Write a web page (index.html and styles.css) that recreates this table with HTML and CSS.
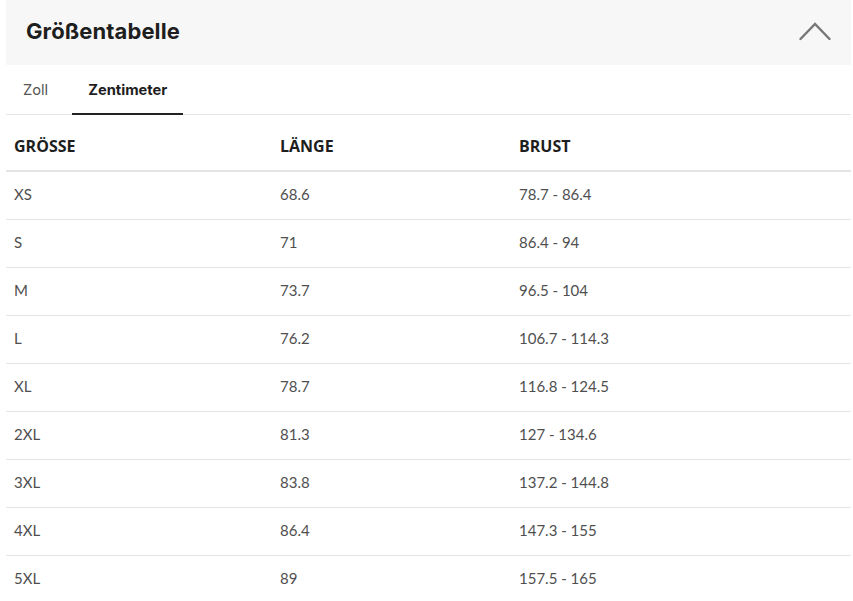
FILE: index.html
```html
<!DOCTYPE html>
<html lang="de">
<head>
<meta charset="utf-8">
<title>Größentabelle</title>
<link rel="stylesheet" href="styles.css">
</head>
<body>
<div class="panel">
  <div class="panel-head">
    <h2 class="panel-title">Größentabelle</h2>
    <svg class="chevron" width="32" height="20" viewBox="0 0 32 20" aria-hidden="true">
      <polyline points="1.5,18 16,3 30.5,18" fill="none" stroke="#777" stroke-width="2.4" stroke-linecap="round" stroke-linejoin="miter"/>
    </svg>
  </div>
  <div class="tabs">
    <div class="tab">Zoll</div>
    <div class="tab tab-active">Zentimeter</div>
  </div>
  <table class="sizes">
    <thead>
      <tr><th class="c1">GRÖSSE</th><th class="c2">LÄNGE</th><th>BRUST</th></tr>
    </thead>
    <tbody>
      <tr><td>XS</td><td>68.6</td><td>78.7 - 86.4</td></tr>
      <tr><td>S</td><td>71</td><td>86.4 - 94</td></tr>
      <tr><td>M</td><td>73.7</td><td>96.5 - 104</td></tr>
      <tr><td>L</td><td>76.2</td><td>106.7 - 114.3</td></tr>
      <tr><td>XL</td><td>78.7</td><td>116.8 - 124.5</td></tr>
      <tr><td>2XL</td><td>81.3</td><td>127 - 134.6</td></tr>
      <tr><td>3XL</td><td>83.8</td><td>137.2 - 144.8</td></tr>
      <tr><td>4XL</td><td>86.4</td><td>147.3 - 155</td></tr>
      <tr><td>5XL</td><td>89</td><td>157.5 - 165</td></tr>
    </tbody>
  </table>
</div>
</body>
</html>
```
FILE: styles.css
```css
html, body {
  margin: 0;
  padding: 0;
  background: #fff;
}
body {
  font-family: "Lato", "Liberation Sans", sans-serif;
  color: #222;
}
.panel {
  margin: 0 2px 0 6px;
}
.panel-head {
  height: 65px;
  background: #f7f7f7;
  display: flex;
  align-items: center;
  justify-content: space-between;
  padding: 0 20px 0 20px;
}
.panel-title {
  margin: 0;
  font-family: "Inter", "Liberation Sans", sans-serif;
  font-size: 22px;
  font-weight: 700;
  letter-spacing: 0.1px;
  color: #1e1e1e;
  padding-bottom: 3px;
}
.chevron {
  display: block;
  margin-top: -3px;
}
.tabs {
  display: flex;
  gap: 8px;
  height: 49px;
  border-bottom: 1px solid #e6e6e6;
  padding-left: 1px;
}
.tab {
  display: flex;
  align-items: center;
  padding: 0 16px;
  font-family: "Inter", "Liberation Sans", sans-serif;
  font-size: 14.7px;
  color: #555;
  margin-bottom: -1px;
}
.tab-active {
  font-weight: 700;
  color: #1e1e1e;
  border-bottom: 2px solid #222;
  padding-top: 1px;
}
.sizes {
  width: 100%;
  border-collapse: collapse;
}
.sizes th {
  font-family: "Open Sans", "Liberation Sans", sans-serif;
  font-weight: 700;
  font-size: 16px;
  text-align: left;
  color: #1e1e1e;
  height: 49px;
  padding: 6px 8px 0;
  border-bottom: 2px solid #e4e4e4;
  vertical-align: middle;
}
.sizes .c1 { width: 250px; }
.sizes .c2 { width: 223px; }
.sizes td {
  font-size: 15px;
  color: #4f4f4f;
  height: 44px;
  padding: 0 8px 3px;
  border-bottom: 1px solid #e4e4e4;
  vertical-align: middle;
}
.sizes tbody tr:last-child td {
  border-bottom: none;
}
```
